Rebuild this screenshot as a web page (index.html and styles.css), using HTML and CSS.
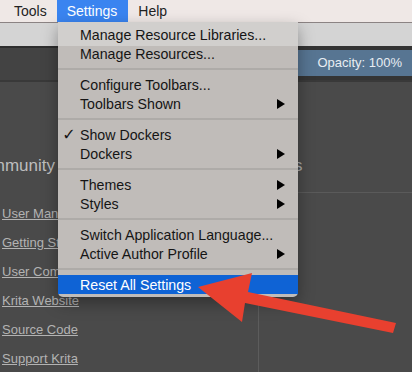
FILE: index.html
```html
<!DOCTYPE html>
<html lang="en">
<head>
<meta charset="UTF-8">
<meta name="viewport" content="width=device-width, initial-scale=1.0">
<title>Krita - Settings menu</title>
<link rel="stylesheet" href="styles.css">
</head>
<body>
<header class="menubar">
  <span class="menubar-item">Tools</span>
  <span class="menubar-item active">Settings</span>
  <span class="menubar-item">Help</span>
</header>
<div class="toolbar"></div>
<div class="dockbar">
  <div class="opacity">Opacity: 100%</div>
</div>
<main class="canvas">
  <section class="column community">
    <h2 class="heading">Community</h2>
    <nav class="links">
      <a href="#">User Manual</a>
      <a href="#">Getting Started</a>
      <a href="#">User Community</a>
      <a href="#">Krita Website</a>
      <a href="#">Source Code</a>
      <a href="#">Support Krita</a>
    </nav>
  </section>
  <section class="column news">
    <h2 class="heading">News</h2>
    <div class="news-list"></div>
  </section>
</main>

<!-- Settings dropdown -->
<ul class="menu">
  <li class="item"><span class="check"></span>Manage Resource Libraries...</li>
  <li class="item"><span class="check"></span>Manage Resources...</li>
  <li class="sep"></li>
  <li class="item"><span class="check"></span>Configure Toolbars...</li>
  <li class="item"><span class="check"></span>Toolbars Shown<svg class="sub" width="8" height="10" viewBox="0 0 8 10"><path d="M0 0 L8 5 L0 10 Z"/></svg></li>
  <li class="sep"></li>
  <li class="item"><span class="check">✓</span>Show Dockers</li>
  <li class="item"><span class="check"></span>Dockers<svg class="sub" width="8" height="10" viewBox="0 0 8 10"><path d="M0 0 L8 5 L0 10 Z"/></svg></li>
  <li class="sep"></li>
  <li class="item"><span class="check"></span>Themes<svg class="sub" width="8" height="10" viewBox="0 0 8 10"><path d="M0 0 L8 5 L0 10 Z"/></svg></li>
  <li class="item"><span class="check"></span>Styles<svg class="sub" width="8" height="10" viewBox="0 0 8 10"><path d="M0 0 L8 5 L0 10 Z"/></svg></li>
  <li class="sep"></li>
  <li class="item"><span class="check"></span>Switch Application Language...</li>
  <li class="item"><span class="check"></span>Active Author Profile<svg class="sub" width="8" height="10" viewBox="0 0 8 10"><path d="M0 0 L8 5 L0 10 Z"/></svg></li>
  <li class="sep"></li>
  <li class="item selected"><span class="check"></span>Reset All Settings</li>
</ul>

<!-- annotation arrow -->
<svg class="annotation" width="412" height="372" viewBox="0 0 412 372">
  <polygon points="198,287 252,273 248,292 396,323 393,333 245,303 242,322" fill="#e8402f"/>
</svg>
</body>
</html>
```

FILE: styles.css
```css
body {
  font-family: 'Liberation Sans', Arial, sans-serif;
  margin: 0;
  padding: 0;
  width: 412px;
  height: 372px;
  overflow: hidden;
  background-color: #4a4a4a;
}
.menubar {
  display: flex;
  height: 22px;
  padding-left: 4px;
  background-color: #efe8e6;
  border-bottom: 1px solid #8b8383;
  font-size: 14px;
  color: #222;
}
.menubar-item {
  padding: 0 10px;
  line-height: 22px;
}
.menubar-item.active {
  background-color: #3a84f0;
  color: #fff;
  padding: 0 11px 0 10px;
}
.toolbar {
  height: 23px;
  background-color: #d4d4d4;
}
.dockbar {
  display: flex;
  justify-content: flex-end;
  height: 32px;
  background-color: #434343;
  border-top: 2px solid #2e2e2e;
}
.opacity {
  width: 114px;
  height: 26px;
  margin-top: 2px;
  background-color: #577592;
  box-shadow: 0 0 0 4px #343434;
  color: #e8edf2;
  font-size: 13px;
  line-height: 26px;
  text-align: right;
  padding-right: 10px;
  box-sizing: border-box;
}
.canvas {
  display: flex;
  height: 290px;
  border-top: 2px solid #393939;
  background-color: #4a4a4a;
}
.column {
  padding-top: 74px;
}
.community {
  width: 258px;
  border-right: 1px solid #5c5c5c;
}
.news {
  flex: 1;
  padding-left: 1px;
}
.heading {
  margin: 0;
  font-size: 17px;
  font-weight: normal;
  line-height: 20px;
  color: #bdbdbd;
}
.community .heading {
  text-indent: -31px;
}
.news .heading {
  color: #a8a8a8;
}
.news-list {
  margin-top: 16px;
  border-top: 1px solid #5a5a5a;
}
.links {
  margin-top: 23px;
}
.links a {
  display: block;
  padding-left: 2px;
  font-size: 13px;
  line-height: 29px;
  color: #b3b3b3;
}
.menu {
  position: absolute;
  top: 22px;
  left: 58px;
  width: 240px;
  margin: 0;
  padding: 3px 0;
  list-style: none;
  background: linear-gradient(#d1cfcd 0, #d1cfcd 24px, #c0bcb9 24px);
  border-radius: 0 0 5px 5px;
  box-shadow: 0 6px 16px rgba(0, 0, 0, 0.35);
  font-size: 14.2px;
  color: #151515;
}
.item {
  display: flex;
  align-items: center;
  height: 19px;
}
.check {
  width: 22px;
  flex-shrink: 0;
  text-align: center;
  font-family: 'DejaVu Sans', sans-serif;
  font-size: 16px;
  font-weight: bold;
}
.sub {
  margin-left: auto;
  margin-right: 13px;
}
.sep {
  height: 2px;
  margin: 5px 0;
  background-color: #aeaba8;
}
.item.selected {
  background-color: #0f63d5;
  color: #fff;
}
.annotation {
  position: absolute;
  top: 0;
  left: 0;
  pointer-events: none;
}
```
